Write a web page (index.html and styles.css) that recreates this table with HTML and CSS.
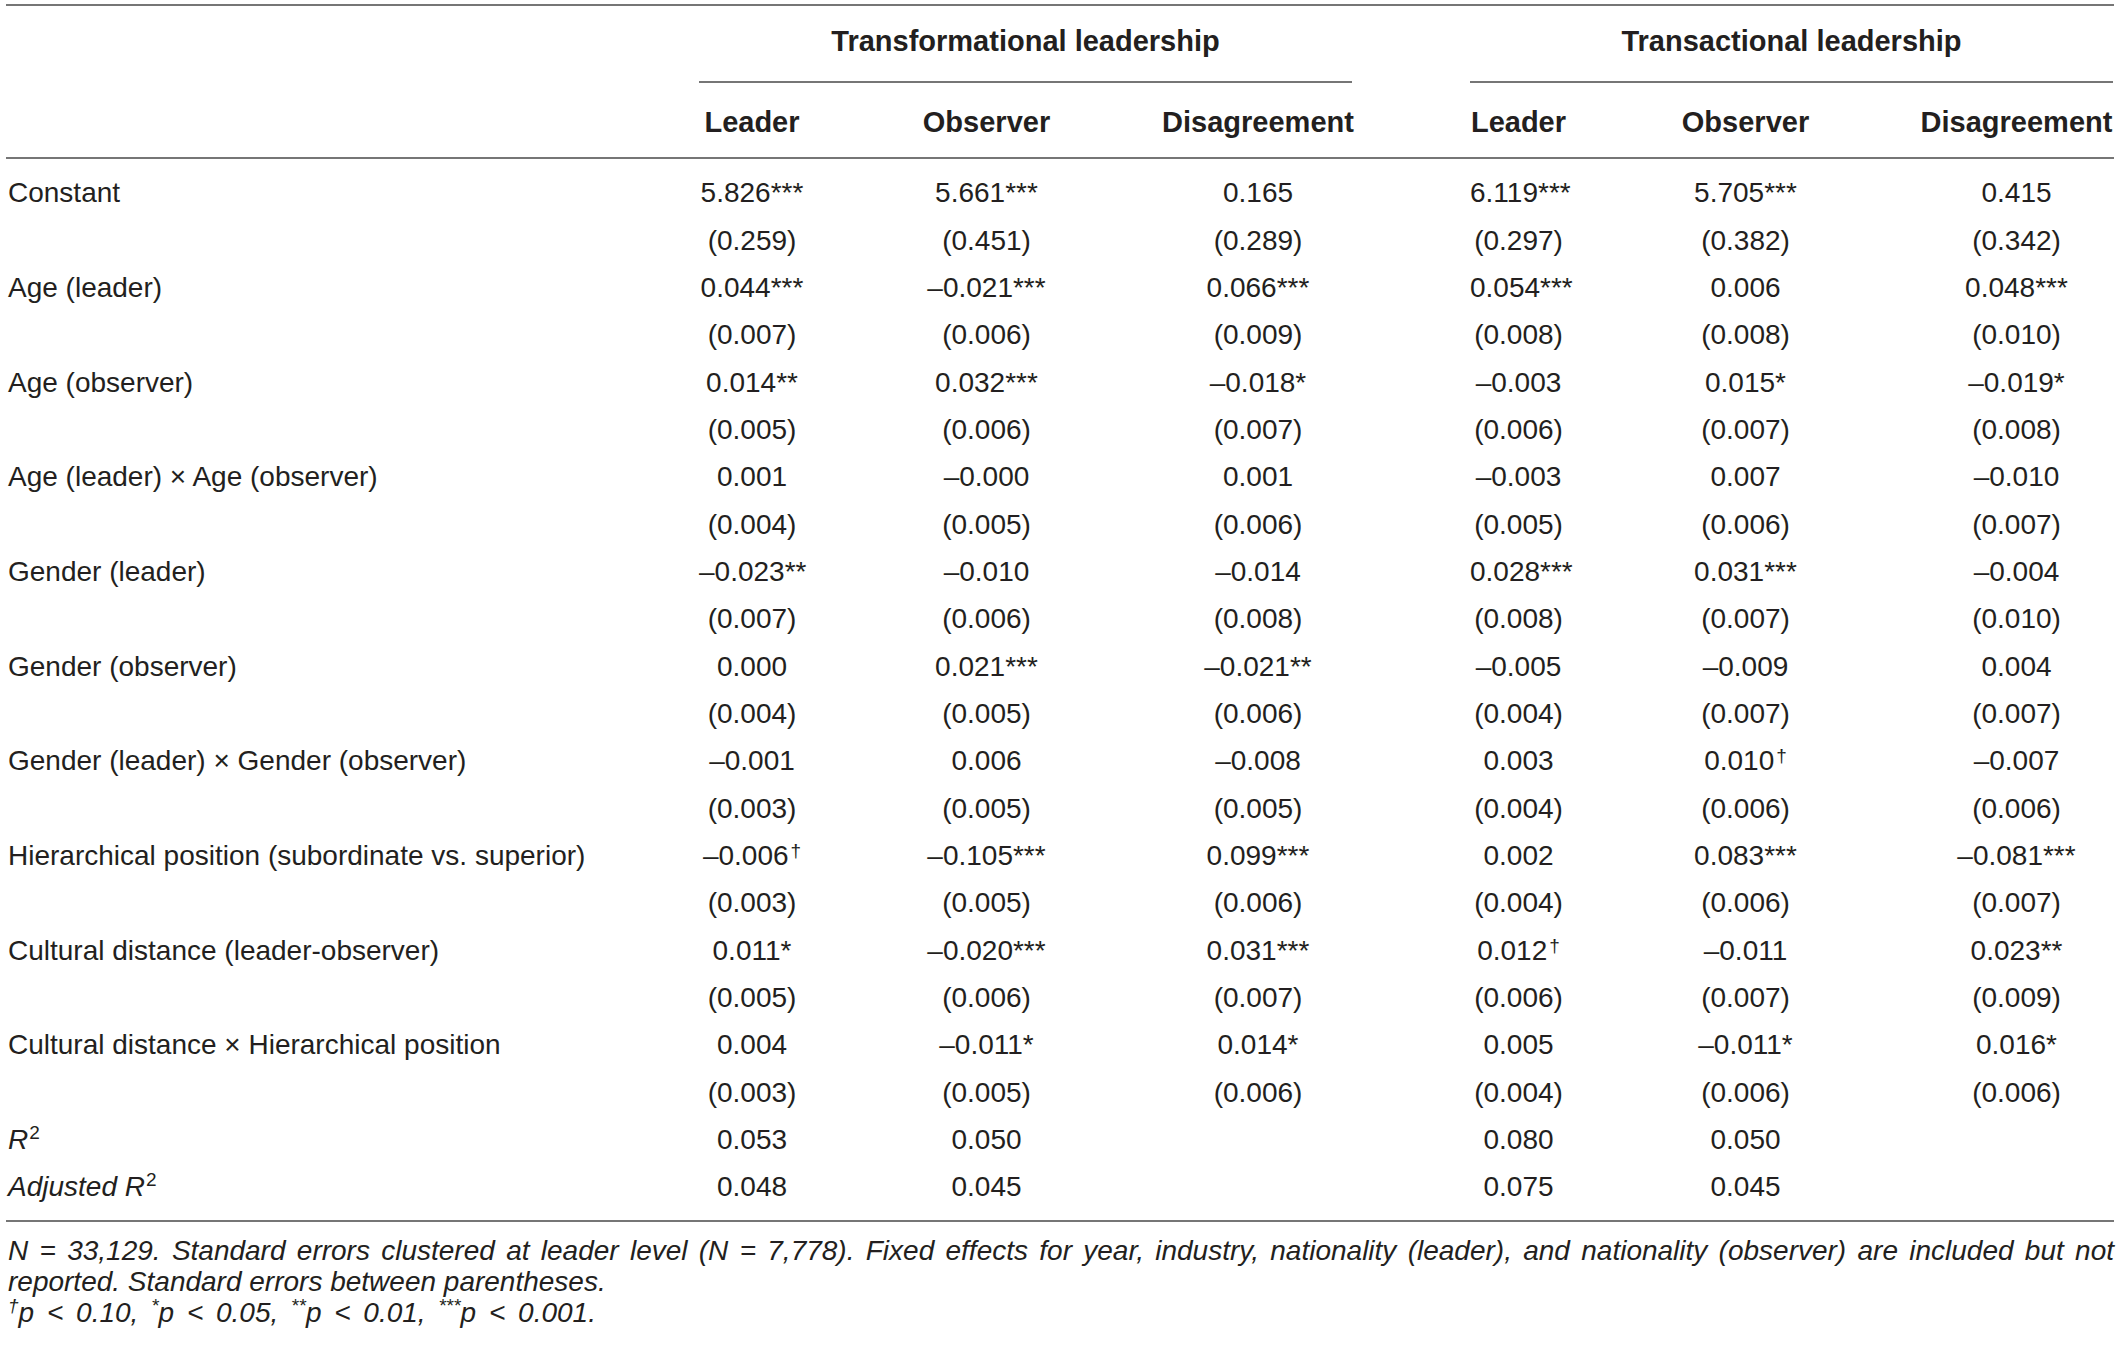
FILE: index.html
```html
<!DOCTYPE html>
<html>
<head>
<meta charset="utf-8">
<link rel="stylesheet" href="styles.css">
</head>
<body>
<div class="tbl">
  <div class="grid ghead">
    <div class="group g1">Transformational leadership</div>
    <div class="group g2">Transactional leadership</div>
  </div>
  <div class="grid subhead">
    <div></div>
    <div class="h">Leader</div>
    <div class="h">Observer</div>
    <div class="h">Disagreement</div>
    <div></div>
    <div class="h">Leader</div>
    <div class="h">Observer</div>
    <div class="h">Disagreement</div>
    <div></div>
  </div>
  <div class="tbody">
    <div class="grid row"><div class="lab">Constant</div><div class="c">5.826***</div><div class="c">5.661***</div><div class="c">0.165</div><div></div><div class="c">6.119***</div><div class="c">5.705***</div><div class="c">0.415</div></div>
    <div class="grid row"><div class="lab"></div><div class="c">(0.259)</div><div class="c">(0.451)</div><div class="c">(0.289)</div><div></div><div class="c">(0.297)</div><div class="c">(0.382)</div><div class="c">(0.342)</div></div>
    <div class="grid row"><div class="lab">Age (leader)</div><div class="c">0.044***</div><div class="c">–0.021***</div><div class="c">0.066***</div><div></div><div class="c">0.054***</div><div class="c">0.006</div><div class="c">0.048***</div></div>
    <div class="grid row"><div class="lab"></div><div class="c">(0.007)</div><div class="c">(0.006)</div><div class="c">(0.009)</div><div></div><div class="c">(0.008)</div><div class="c">(0.008)</div><div class="c">(0.010)</div></div>
    <div class="grid row"><div class="lab">Age (observer)</div><div class="c">0.014**</div><div class="c">0.032***</div><div class="c">–0.018*</div><div></div><div class="c">–0.003</div><div class="c">0.015*</div><div class="c">–0.019*</div></div>
    <div class="grid row"><div class="lab"></div><div class="c">(0.005)</div><div class="c">(0.006)</div><div class="c">(0.007)</div><div></div><div class="c">(0.006)</div><div class="c">(0.007)</div><div class="c">(0.008)</div></div>
    <div class="grid row"><div class="lab">Age (leader) × Age (observer)</div><div class="c">0.001</div><div class="c">–0.000</div><div class="c">0.001</div><div></div><div class="c">–0.003</div><div class="c">0.007</div><div class="c">–0.010</div></div>
    <div class="grid row"><div class="lab"></div><div class="c">(0.004)</div><div class="c">(0.005)</div><div class="c">(0.006)</div><div></div><div class="c">(0.005)</div><div class="c">(0.006)</div><div class="c">(0.007)</div></div>
    <div class="grid row"><div class="lab">Gender (leader)</div><div class="c">–0.023**</div><div class="c">–0.010</div><div class="c">–0.014</div><div></div><div class="c">0.028***</div><div class="c">0.031***</div><div class="c">–0.004</div></div>
    <div class="grid row"><div class="lab"></div><div class="c">(0.007)</div><div class="c">(0.006)</div><div class="c">(0.008)</div><div></div><div class="c">(0.008)</div><div class="c">(0.007)</div><div class="c">(0.010)</div></div>
    <div class="grid row"><div class="lab">Gender (observer)</div><div class="c">0.000</div><div class="c">0.021***</div><div class="c">–0.021**</div><div></div><div class="c">–0.005</div><div class="c">–0.009</div><div class="c">0.004</div></div>
    <div class="grid row"><div class="lab"></div><div class="c">(0.004)</div><div class="c">(0.005)</div><div class="c">(0.006)</div><div></div><div class="c">(0.004)</div><div class="c">(0.007)</div><div class="c">(0.007)</div></div>
    <div class="grid row"><div class="lab">Gender (leader) × Gender (observer)</div><div class="c">–0.001</div><div class="c">0.006</div><div class="c">–0.008</div><div></div><div class="c">0.003</div><div class="c">0.010<sup class="dg">†</sup></div><div class="c">–0.007</div></div>
    <div class="grid row"><div class="lab"></div><div class="c">(0.003)</div><div class="c">(0.005)</div><div class="c">(0.005)</div><div></div><div class="c">(0.004)</div><div class="c">(0.006)</div><div class="c">(0.006)</div></div>
    <div class="grid row"><div class="lab">Hierarchical position (subordinate vs. superior)</div><div class="c">–0.006<sup class="dg">†</sup></div><div class="c">–0.105***</div><div class="c">0.099***</div><div></div><div class="c">0.002</div><div class="c">0.083***</div><div class="c">–0.081***</div></div>
    <div class="grid row"><div class="lab"></div><div class="c">(0.003)</div><div class="c">(0.005)</div><div class="c">(0.006)</div><div></div><div class="c">(0.004)</div><div class="c">(0.006)</div><div class="c">(0.007)</div></div>
    <div class="grid row"><div class="lab">Cultural distance (leader-observer)</div><div class="c">0.011*</div><div class="c">–0.020***</div><div class="c">0.031***</div><div></div><div class="c">0.012<sup class="dg">†</sup></div><div class="c">–0.011</div><div class="c">0.023**</div></div>
    <div class="grid row"><div class="lab"></div><div class="c">(0.005)</div><div class="c">(0.006)</div><div class="c">(0.007)</div><div></div><div class="c">(0.006)</div><div class="c">(0.007)</div><div class="c">(0.009)</div></div>
    <div class="grid row"><div class="lab">Cultural distance × Hierarchical position</div><div class="c">0.004</div><div class="c">–0.011*</div><div class="c">0.014*</div><div></div><div class="c">0.005</div><div class="c">–0.011*</div><div class="c">0.016*</div></div>
    <div class="grid row"><div class="lab"></div><div class="c">(0.003)</div><div class="c">(0.005)</div><div class="c">(0.006)</div><div></div><div class="c">(0.004)</div><div class="c">(0.006)</div><div class="c">(0.006)</div></div>
    <div class="grid row"><div class="lab"><i>R</i><sup class="r2">2</sup></div><div class="c">0.053</div><div class="c">0.050</div><div class="c"></div><div></div><div class="c">0.080</div><div class="c">0.050</div><div class="c"></div></div>
    <div class="grid row"><div class="lab"><i>Adjusted R</i><sup class="r2">2</sup></div><div class="c">0.048</div><div class="c">0.045</div><div class="c"></div><div></div><div class="c">0.075</div><div class="c">0.045</div><div class="c"></div></div>
  </div>
  <div class="notes">
    <div class="just">N = 33,129. Standard errors clustered at leader level (N = 7,778). Fixed effects for year, industry, nationality (leader), and nationality (observer) are included but not</div>
    <div>reported. Standard errors between parentheses.</div>
    <div class="sig"><sup>†</sup>p &lt; 0.10, <sup>*</sup>p &lt; 0.05, <sup>**</sup>p &lt; 0.01, <sup>***</sup>p &lt; 0.001.</div>
  </div>
</div>
</body>
</html>
```

FILE: styles.css
```css
html, body {
  margin: 0;
  padding: 0;
  background: #ffffff;
}

body {
  font-family: "Liberation Sans", Arial, sans-serif;
  color: #231f20;
  font-size: 28px;
}

.tbl {
  margin: 4px 0 0 6px;
  width: 2108px;
  border-top: 2px solid #767676;
}

.grid {
  display: grid;
  grid-template-columns: 693px 106px 363px 180px 122px 97px 357px 185px 5px;
}

.ghead .group {
  grid-row: 1;
  height: 70px;
  padding-bottom: 5px;
  border-bottom: 2px solid #767676;
  display: flex;
  align-items: center;
  justify-content: center;
  font-weight: bold;
  font-size: 29px;
  white-space: nowrap;
}

.ghead .g1 {
  grid-column: 2 / 5;
  margin-right: -4px;
}

.ghead .g2 {
  grid-column: 6 / 9;
  margin-right: -4px;
}

.subhead {
  height: 70px;
  padding-top: 4px;
  border-bottom: 2px solid #767676;
  font-weight: bold;
  font-size: 29px;
}

.h {
  display: flex;
  align-items: center;
  justify-content: center;
  white-space: nowrap;
}

.tbody {
  padding: 10.3px 0 9.3px;
  border-bottom: 2px solid #767676;
}

.row {
  height: 47.33px;
  line-height: 47.33px;
}

.c {
  text-align: center;
  white-space: nowrap;
}

.lab {
  padding-left: 2px;
  white-space: nowrap;
}

sup {
  line-height: 0;
}

sup.dg {
  font-size: 19px;
  vertical-align: 8px;
  margin-left: 2px;
}

sup.r2 {
  font-size: 19px;
  vertical-align: 10px;
  margin-left: 1px;
}

.notes {
  padding-top: 13.5px;
  padding-left: 2px;
  font-style: italic;
  font-size: 28px;
  line-height: 31px;
}

.notes sup {
  font-size: 19px;
  vertical-align: 10px;
}

.sig {
  word-spacing: 5px;
}

.just {
  white-space: nowrap;
  text-align: justify;
  text-align-last: justify;
}
```
